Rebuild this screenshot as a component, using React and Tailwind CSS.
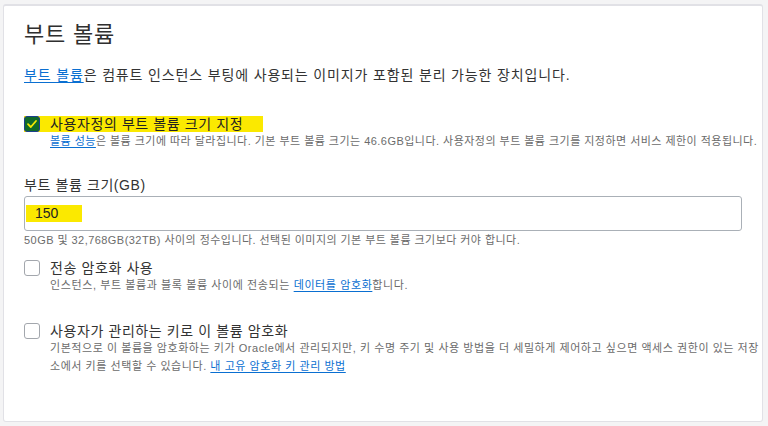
const FONT = { fontFamily: '"Liberation Sans", "Noto Sans CJK KR", sans-serif' }

function Box({ checked }) {
  if (checked) {
    return (
      <span className="flex h-[16px] w-[16px] shrink-0 items-center justify-center rounded-[3px] border border-[#1d3f8c] bg-[#106a2a]">
        <svg width="12" height="12" viewBox="0 0 12 12" fill="none">
          <path d="M2 6.2 L4.8 9 L10 3" stroke="#f5e800" strokeWidth="1.8" strokeLinecap="round" strokeLinejoin="round" />
        </svg>
      </span>
    )
  }
  return <span className="block h-[16px] w-[16px] shrink-0 rounded-[3px] border border-[#a3a7ad] bg-white" />
}

function Link({ children }) {
  return <a className="text-[#0a6fd1] underline underline-offset-2 cursor-pointer">{children}</a>
}

export default function App() {
  return (
    <div className="h-[426px] w-[768px] overflow-hidden bg-[#f4f4f5] pt-[4px] pl-[3px]" style={FONT}>
      <div className="h-[418px] w-[760px] overflow-hidden rounded-[3px] border border-[#e1e1e6] border-t-2 bg-white px-[20px] text-[#333]">
        <h1 className="pt-[14px] text-[22px] leading-[30px] font-normal tracking-[0.8px] text-[#2f2f2f]">부트 볼륨</h1>

        <p className="mt-[15px] text-[14px] leading-[20px] tracking-[0.85px]">
          <Link>부트 볼륨</Link>은 컴퓨트 인스턴스 부팅에 사용되는 이미지가 포함된 분리 가능한 장치입니다.
        </p>

        <div className="mt-[31px] flex h-[16px] w-[239px] items-center gap-[10px] bg-[#fbe900]">
          <Box checked />
          <span className="whitespace-nowrap text-[14px] leading-[16px] tracking-[0.6px] text-[#222]">사용자정의 부트 볼륨 크기 지정</span>
        </div>
        <p className="mt-[1px] whitespace-nowrap pl-[26px] text-[11px] leading-[16px] tracking-[0.47px] text-[#6b6b6b]">
          <Link>볼륨 성능</Link>은 볼륨 크기에 따라 달라집니다. 기본 부트 볼륨 크기는 46.6GB입니다. 사용자정의 부트 볼륨 크기를 지정하면 서비스 제한이 적용됩니다.
        </p>

        <label className="mt-[26px] block text-[14px] leading-[20px] tracking-[0.6px]">부트 볼륨 크기(GB)</label>
        <div className="mt-[1px] flex h-[35px] w-[718px] items-center rounded-[3px] border border-[#aab0b7] pl-[1px]">
          <span className="flex h-[17px] w-[56px] items-center bg-[#fbe900] pl-[9px] text-[14px] text-[#222]">150</span>
        </div>
        <p className="mt-[1px] text-[11px] leading-[16px] tracking-[0.45px] text-[#6b6b6b]">
          50GB 및 32,768GB(32TB) 사이의 정수입니다. 선택된 이미지의 기본 부트 볼륨 크기보다 커야 합니다.
        </p>

        <div className="mt-[12px] flex h-[16px] items-center gap-[10px]">
          <Box />
          <span className="text-[14px] leading-[16px] tracking-[0.6px]">전송 암호화 사용</span>
        </div>
        <p className="mt-[1px] pl-[26px] text-[11px] leading-[16px] tracking-[0.6px] text-[#6b6b6b]">
          인스턴스, 부트 볼륨과 블록 볼륨 사이에 전송되는 <Link>데이터를 암호화</Link>합니다.
        </p>

        <div className="mt-[30px] flex h-[16px] items-center gap-[10px]">
          <Box />
          <span className="text-[14px] leading-[16px] tracking-[0.6px]">사용자가 관리하는 키로 이 볼륨 암호화</span>
        </div>
        <div className="pl-[26px] text-[11px] leading-[18px] tracking-[0.55px] text-[#6b6b6b]">
          <p className="whitespace-nowrap">
            기본적으로 이 볼륨을 암호화하는 키가 Oracle에서 관리되지만, 키 수명 주기 및 사용 방법을 더 세밀하게 제어하고 싶으면 액세스 권한이 있는 저장
          </p>
          <p className="whitespace-nowrap">
            소에서 키를 선택할 수 있습니다. <Link>내 고유 암호화 키 관리 방법</Link>
          </p>
        </div>
      </div>
    </div>
  )
}
